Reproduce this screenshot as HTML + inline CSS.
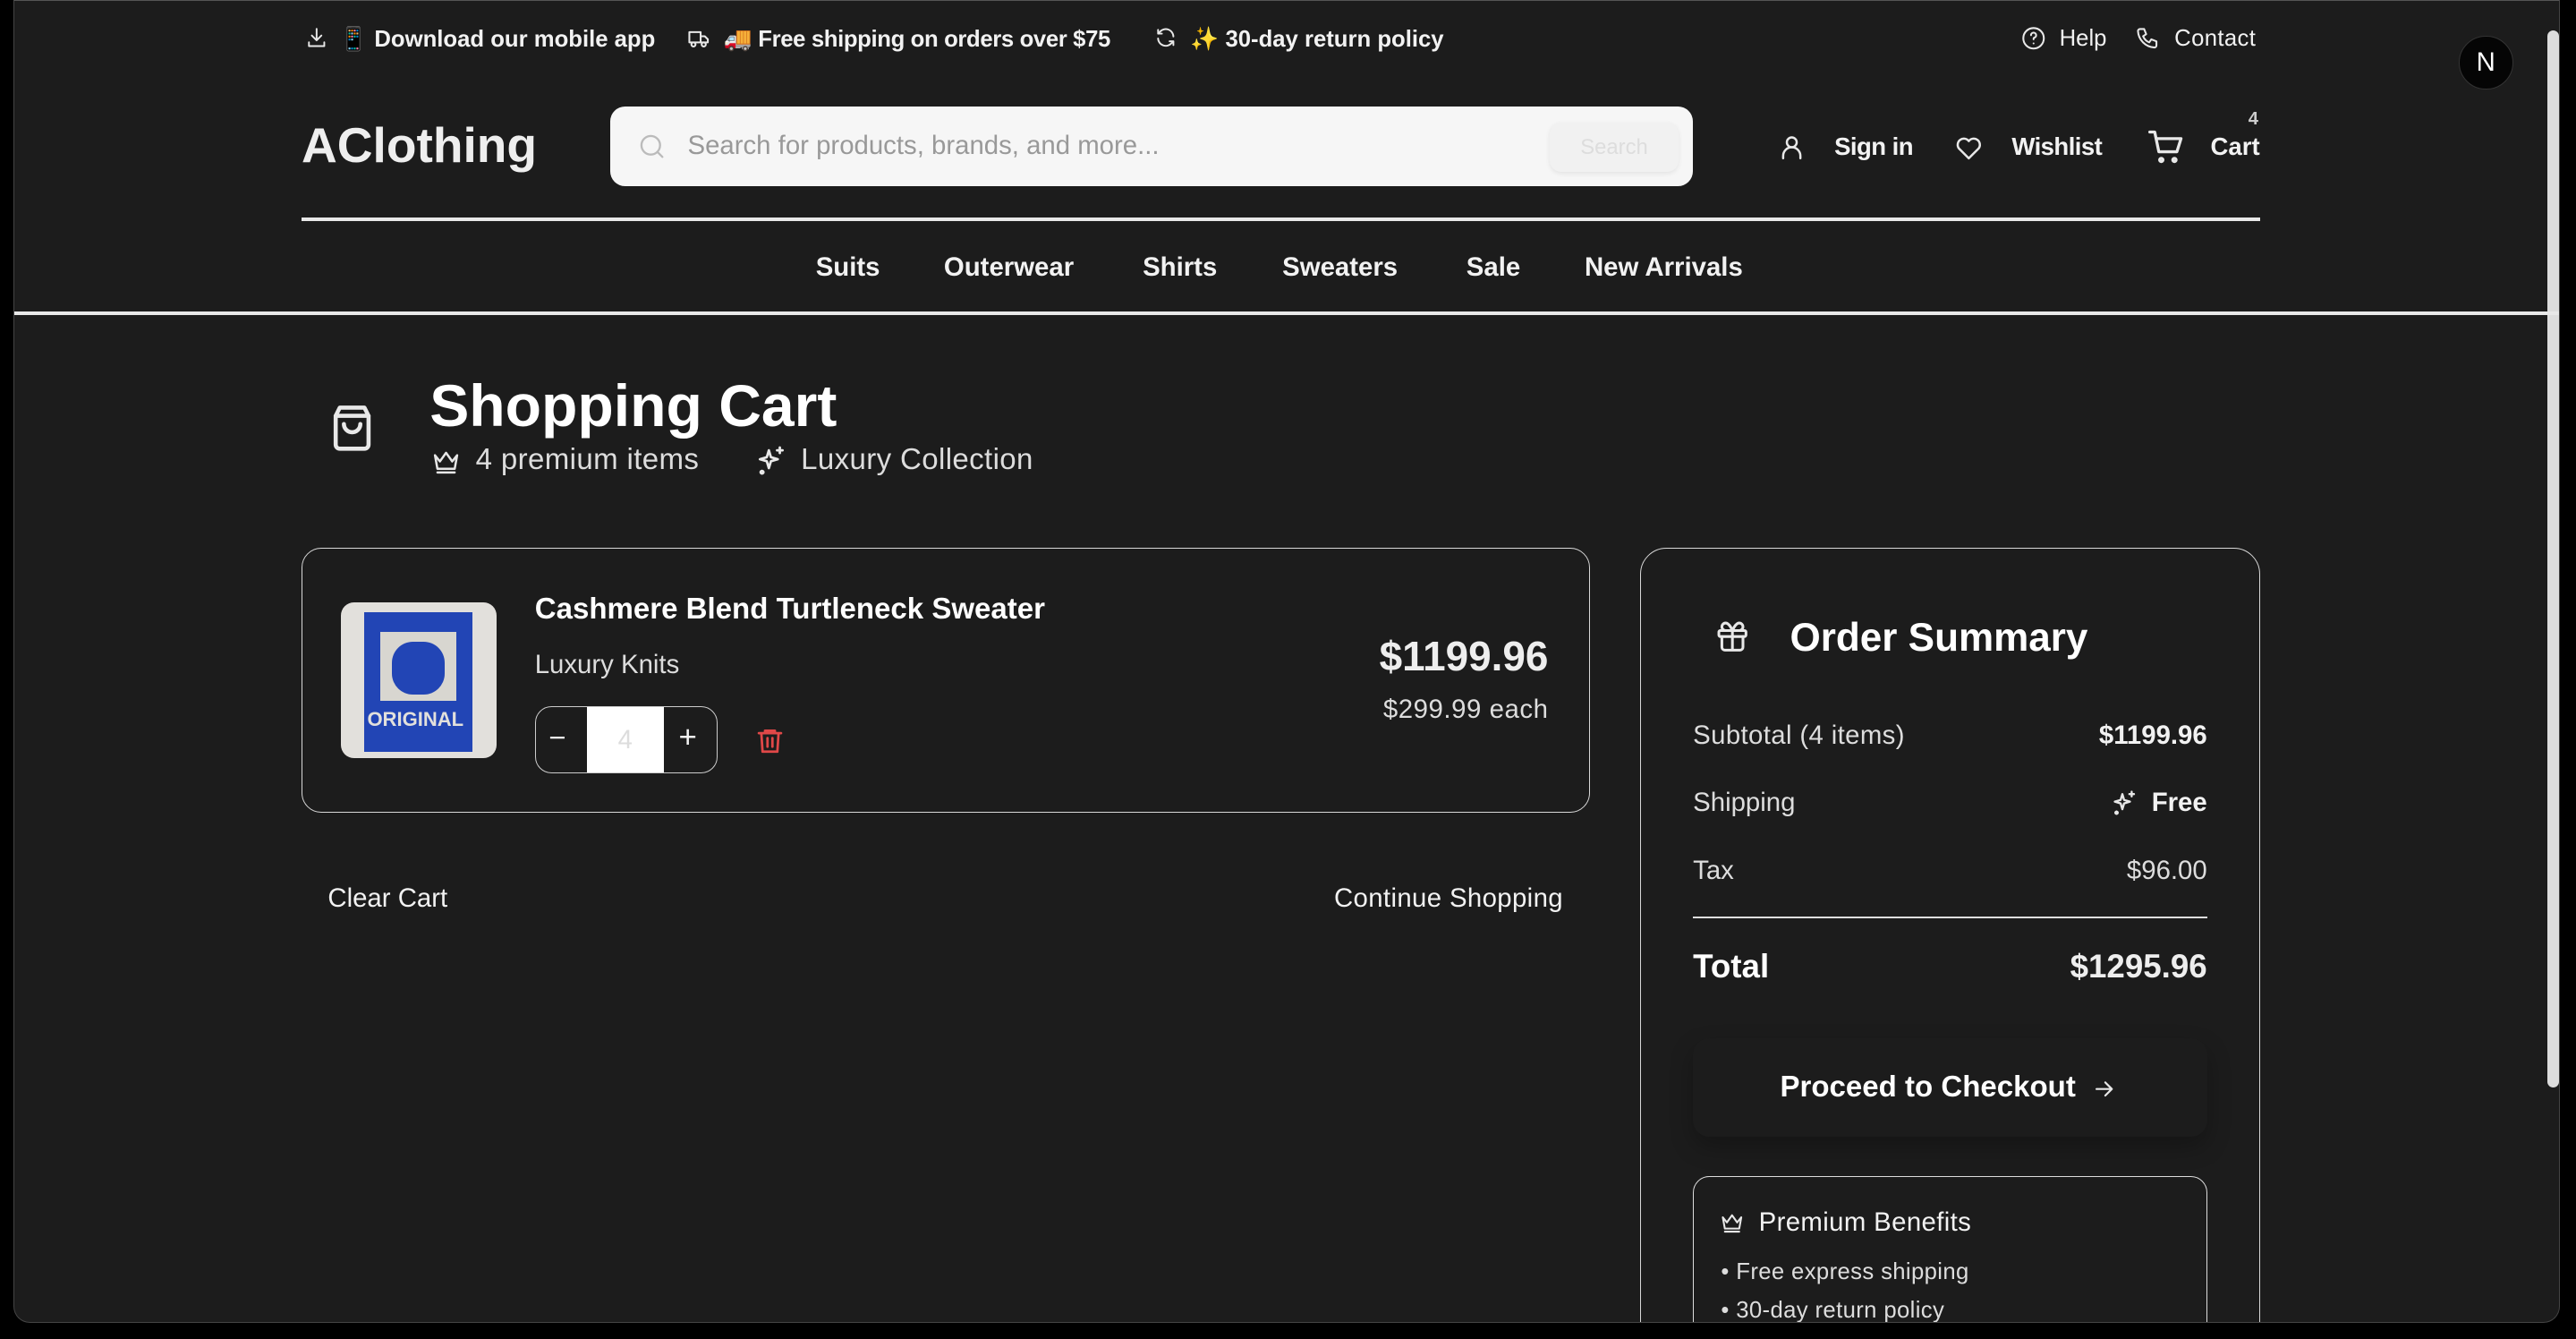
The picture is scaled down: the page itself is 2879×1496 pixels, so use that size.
<!DOCTYPE html>
<html><head><meta charset="utf-8"><style>
html{zoom:1.83610}
body{margin:0;width:1568px;height:815px;background:#000;overflow:hidden;font-family:"Liberation Sans",sans-serif;color:#f2f2f2;position:relative}
#win{position:absolute;left:8px;top:0;width:1550px;height:805px;background:#1c1c1c;border:1px solid #444;border-top:1px solid #555;border-radius:0 0 10px 10px;box-sizing:border-box;overflow:hidden}
.a{position:absolute;white-space:nowrap}
svg{position:absolute;fill:none;stroke:#e8e8e8;stroke-width:1.8;stroke-linecap:round;stroke-linejoin:round}
.b{font-weight:bold}
</style></head><body>
<div id="win">
<svg style="left:177px;top:15px" width="14" height="14" viewBox="0 0 24 24"><path d="M12 3v12M7 10l5 5 5-5M4 17v4h16v-4"/></svg>
<div class="a b" style="left:198px;top:15px;font-size:14px">📱 Download our mobile app</div>
<svg style="left:409px;top:15px" width="15" height="15" viewBox="0 0 24 24"><path d="M3 6h11v10H3zM14 10h4l3 3v3h-7"/><circle cx="7" cy="18" r="2"/><circle cx="17" cy="18" r="2"/></svg>
<div class="a b" style="left:432px;top:15px;font-size:14px;letter-spacing:-0.2px">🚚 Free shipping on orders over $75</div>
<svg style="left:694px;top:15px" width="14" height="14" viewBox="0 0 24 24"><path d="M20 11a8 8 0 0 0-14-5L4 8M4 4v4h4M4 13a8 8 0 0 0 14 5l2-2M20 20v-4h-4"/></svg>
<div class="a b" style="left:716px;top:15px;font-size:14px">✨ 30-day return policy</div>
<svg style="left:1222px;top:15px" width="15" height="15" viewBox="0 0 24 24"><circle cx="12" cy="12" r="10"/><path d="M9.5 9a2.5 2.5 0 1 1 3 2.5c-.5.2-.5.8-.5 1.5M12 17h.01"/></svg>
<div class="a" style="left:1245px;top:15px;font-size:14px">Help</div>
<svg style="left:1291px;top:15px" width="15" height="15" viewBox="0 0 24 24"><path d="M5 3h4l2 5-3 2a11 11 0 0 0 6 6l2-3 5 2v4a2 2 0 0 1-2 2A17 17 0 0 1 3 5a2 2 0 0 1 2-2z"/></svg>
<div class="a" style="left:1315px;top:15px;font-size:14px;letter-spacing:0.2px">Contact</div>
<div class="a" style="left:1488px;top:21px;width:32px;height:32px;border-radius:50%;background:#050505;border:1px solid #333;color:#fff;font-size:16px;text-align:center;line-height:32px">N</div>
<div class="a" style="left:1542px;top:18px;width:7px;height:643px;border-radius:4px;background:#ddd"></div>

<div class="a b" style="left:175px;top:70px;font-size:30px;color:#eee">AClothing</div>
<div class="a" style="left:363px;top:64px;width:659px;height:49px;background:#f6f6f6;border-radius:9px"></div>
<svg style="left:380px;top:80px;stroke:#bbb" width="17" height="17" viewBox="0 0 24 24"><circle cx="11" cy="11" r="8"/><path d="M21 21l-4.3-4.3"/></svg>
<div class="a" style="left:410px;top:79px;font-size:16px;color:#999">Search for products, brands, and more...</div>
<div class="a" style="left:935px;top:74px;width:78px;height:30px;background:#f1f1f1;border-radius:7px;color:#ddd;font-size:13px;text-align:center;line-height:30px;box-shadow:0 1px 3px rgba(0,0,0,.08)">Search</div>
<svg style="left:1073px;top:80px" width="18" height="18" viewBox="0 0 24 24"><circle cx="12" cy="8" r="4"/><path d="M5 21v-2a6 6 0 0 1 14 0v2"/></svg>
<div class="a b" style="left:1108px;top:80px;font-size:15px;letter-spacing:-0.3px">Sign in</div>
<svg style="left:1180px;top:80px" width="20" height="18" viewBox="0 0 24 24"><path d="M12 21l-8-8a5 5 0 0 1 8-6 5 5 0 0 1 8 6z"/></svg>
<div class="a b" style="left:1216px;top:80px;font-size:15px;letter-spacing:-0.3px">Wishlist</div>
<svg style="left:1298px;top:77px" width="24" height="24" viewBox="0 0 24 24"><path d="M2 3h3l2.5 12h11L21 7H6"/><circle cx="9" cy="20" r="1"/><circle cx="17" cy="20" r="1"/></svg>
<div class="a b" style="left:1360px;top:66px;font-size:11px;color:#ccc">4</div>
<div class="a b" style="left:1337px;top:80px;font-size:15px">Cart</div>
<div class="a" style="left:175px;top:132px;width:1192px;height:2px;background:#e8e8e8"></div>

<div class="a b" style="left:488px;top:153px;font-size:16px">Suits</div>
<div class="a b" style="left:566px;top:153px;font-size:16px">Outerwear</div>
<div class="a b" style="left:687px;top:153px;font-size:16px">Shirts</div>
<div class="a b" style="left:772px;top:153px;font-size:16px">Sweaters</div>
<div class="a b" style="left:884px;top:153px;font-size:16px">Sale</div>
<div class="a b" style="left:956px;top:153px;font-size:16px">New Arrivals</div>
<div class="a" style="left:0;top:189px;width:1550px;height:2px;background:#e8e8e8"></div>

<svg style="left:191px;top:244px;stroke-width:2" width="30" height="32" viewBox="0 0 24 24"><path d="M6 2h12l2 4v14a2 2 0 0 1-2 2H6a2 2 0 0 1-2-2V6z"/><path d="M4 6h16M16 10a4 4 0 0 1-8 0"/></svg>
<div class="a b" style="left:253px;top:226px;font-size:36px;color:#fff">Shopping Cart</div>
<svg style="left:254px;top:271px" width="18" height="18" viewBox="0 0 24 24"><path d="M3 7l4 5 5-7 5 7 4-5-2 11H5zM5 21h14"/></svg>
<div class="a" style="left:281px;top:269px;font-size:18px;color:#ddd;letter-spacing:0.2px">4 premium items</div>
<svg style="left:451px;top:270px" width="20" height="20" viewBox="0 0 24 24"><path d="M10 4l1.5 5 5 1.5-5 1.5L10 17l-1.5-5L3.5 10.5l5-1.5zM18 2v4M16 4h4M5 19a1 1 0 1 0 .01 0"/></svg>
<div class="a" style="left:479px;top:269px;font-size:18px;color:#ddd;letter-spacing:0.2px">Luxury Collection</div>

<div class="a" style="left:175px;top:333px;width:784px;height:161px;border:1px solid #d8d8d8;border-radius:12px;box-sizing:border-box"></div>
<div class="a" style="left:199px;top:366px;width:95px;height:95px;border-radius:8px;background:#e2e0dc;overflow:hidden">
 <div style="position:absolute;left:14px;top:6px;width:66px;height:85px;background:#2245b5"></div>
 <div style="position:absolute;left:24px;top:18px;width:46px;height:42px;background:#d8d6d0"></div>
 <div style="position:absolute;left:31px;top:24px;width:32px;height:32px;background:#2245b5;border-radius:40%"></div>
 <div style="position:absolute;left:16px;top:64px;font-size:12px;font-weight:bold;color:#e2e0dc">ORIGINAL</div>
</div>
<div class="a b" style="left:317px;top:360px;font-size:18px;color:#fff">Cashmere Blend Turtleneck Sweater</div>
<div class="a" style="left:317px;top:395px;font-size:16px;color:#ddd">Luxury Knits</div>
<div class="a" style="left:317px;top:429px;width:111px;height:41px;border:1px solid #ccc;border-radius:10px;box-sizing:border-box;overflow:hidden">
 <div style="position:absolute;left:31px;top:0;width:47px;height:41px;background:#fff;color:#ddd;text-align:center;line-height:40px;font-size:16px">4</div>
 <div style="position:absolute;left:8px;top:9px;font-size:18px">−</div>
 <div style="position:absolute;left:87px;top:8px;font-size:19px">+</div>
</div>
<svg style="left:451px;top:440px;stroke:#e04848;stroke-width:2" width="18" height="20" viewBox="0 0 24 24"><path d="M3 6h18M8 6V4h8v2M5 6l1 15h12l1-15M10 10v7M14 10v7"/></svg>
<div class="a b" style="right:615px;top:384px;font-size:25px;color:#eee">$1199.96</div>
<div class="a" style="right:615px;top:422px;font-size:16px;color:#ddd;letter-spacing:0.3px">$299.99 each</div>

<div class="a" style="left:191px;top:537px;font-size:16px">Clear Cart</div>
<div class="a" style="right:606px;top:537px;font-size:16px;letter-spacing:0.2px">Continue Shopping</div>

<div class="a" style="left:990px;top:333px;width:377px;height:500px;border:1px solid #d8d8d8;border-radius:16px;box-sizing:border-box"></div>
<svg style="left:1035px;top:376px" width="22" height="22" viewBox="0 0 24 24"><rect x="3" y="8" width="18" height="4" rx="1"/><path d="M12 8v13M19 12v7a2 2 0 0 1-2 2H7a2 2 0 0 1-2-2v-7M7.5 8a2.5 2.5 0 0 1 0-5C10 3 12 8 12 8s2-5 4.5-5a2.5 2.5 0 0 1 0 5"/></svg>
<div class="a b" style="left:1081px;top:374px;font-size:24px;color:#fff">Order Summary</div>
<div class="a" style="left:1022px;top:438px;font-size:16px;color:#ddd;letter-spacing:0.2px">Subtotal (4 items)</div>
<div class="a b" style="right:214px;top:438px;font-size:16px">$1199.96</div>
<div class="a" style="left:1022px;top:479px;font-size:16px;color:#ddd">Shipping</div>
<svg style="left:1276px;top:480px" width="17" height="17" viewBox="0 0 24 24"><path d="M10 4l1.5 5 5 1.5-5 1.5L10 17l-1.5-5L3.5 10.5l5-1.5zM18 2v4M16 4h4M5 19a1 1 0 1 0 .01 0"/></svg>
<div class="a b" style="right:214px;top:479px;font-size:16px">Free</div>
<div class="a" style="left:1022px;top:520px;font-size:16px;color:#ddd">Tax</div>
<div class="a" style="right:214px;top:520px;font-size:16px;color:#ddd">$96.00</div>
<div class="a" style="left:1022px;top:557px;width:313px;height:1px;background:#ddd"></div>
<div class="a b" style="left:1022px;top:576px;font-size:20px;color:#fff">Total</div>
<div class="a b" style="right:214px;top:576px;font-size:20px;color:#eee">$1295.96</div>
<div class="a" style="left:1022px;top:631px;width:313px;height:60px;border-radius:10px;background:#1c1c1c;box-shadow:0 6px 14px rgba(0,0,0,.25)"></div>
<div class="a b" style="left:1075px;top:651px;font-size:18px;color:#fff">Proceed to Checkout</div>
<svg style="left:1264px;top:654px" width="16" height="16" viewBox="0 0 24 24"><path d="M5 12h14M13 6l6 6-6 6"/></svg>
<div class="a" style="left:1022px;top:715px;width:313px;height:120px;border:1px solid #ddd;border-radius:10px;box-sizing:border-box"></div>
<svg style="left:1038px;top:736px" width="15" height="15" viewBox="0 0 24 24"><path d="M3 7l4 5 5-7 5 7 4-5-2 11H5zM5 21h14"/></svg>
<div class="a" style="left:1062px;top:734px;font-size:16px;letter-spacing:0.2px">Premium Benefits</div>
<div class="a" style="left:1039px;top:766px;font-size:14px;color:#ddd;letter-spacing:0.2px">• Free express shipping</div>
<div class="a" style="left:1039px;top:789px;font-size:14px;color:#ddd;letter-spacing:0.2px">• 30-day return policy</div>
</div>
</body></html>
